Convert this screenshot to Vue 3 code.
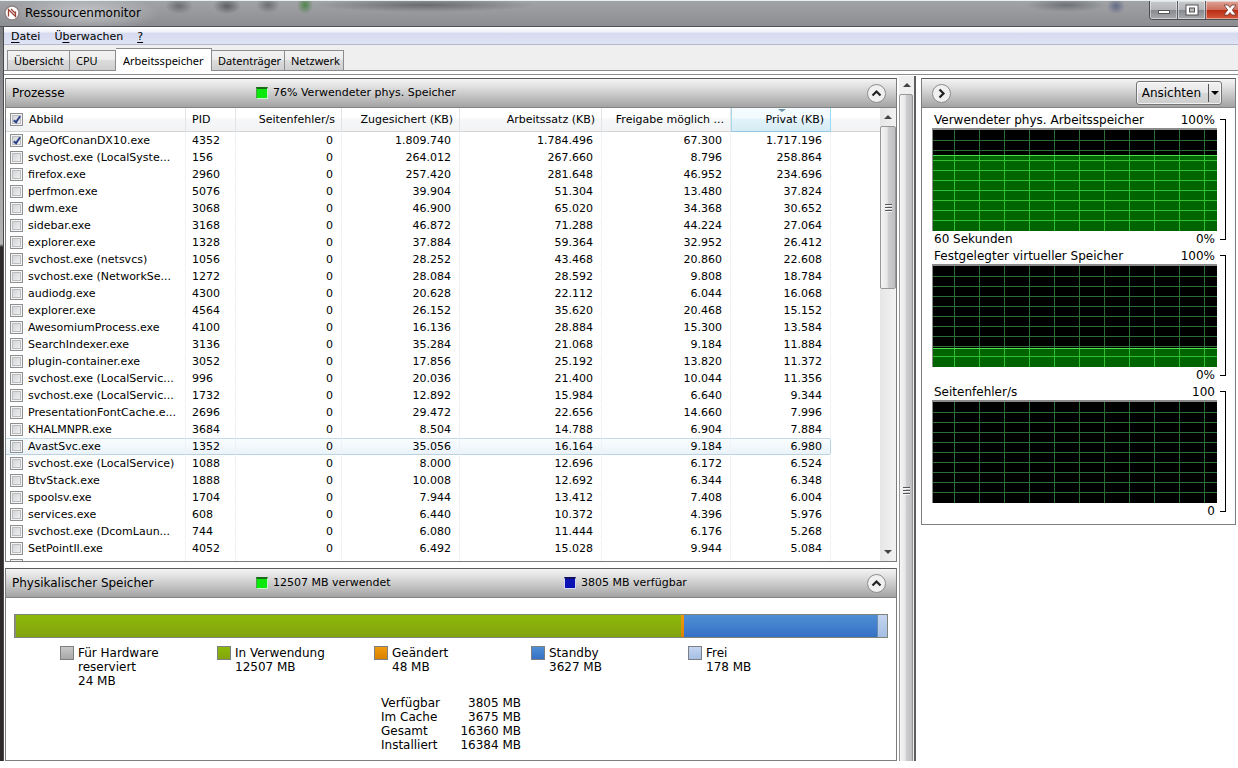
<script setup>
import { ref } from 'vue'

const tabs = [
  { name: 'Übersicht', cls: 't1' },
  { name: 'CPU', cls: 't2' },
  { name: 'Arbeitsspeicher', cls: 't3' },
  { name: 'Datenträger', cls: 't4' },
  { name: 'Netzwerk', cls: 't5' },
]
const activeTab = ref('Arbeitsspeicher')

const processes = ref(
  [
    ['AgeOfConanDX10.exe', '4352', '1.809.740', '1.784.496', '67.300', '1.717.196'],
    ['svchost.exe (LocalSyste...', '156', '264.012', '267.660', '8.796', '258.864'],
    ['firefox.exe', '2960', '257.420', '281.648', '46.952', '234.696'],
    ['perfmon.exe', '5076', '39.904', '51.304', '13.480', '37.824'],
    ['dwm.exe', '3068', '46.900', '65.020', '34.368', '30.652'],
    ['sidebar.exe', '3168', '46.872', '71.288', '44.224', '27.064'],
    ['explorer.exe', '1328', '37.884', '59.364', '32.952', '26.412'],
    ['svchost.exe (netsvcs)', '1056', '28.252', '43.468', '20.860', '22.608'],
    ['svchost.exe (NetworkSe...', '1272', '28.084', '28.592', '9.808', '18.784'],
    ['audiodg.exe', '4300', '20.628', '22.112', '6.044', '16.068'],
    ['explorer.exe', '4564', '26.152', '35.620', '20.468', '15.152'],
    ['AwesomiumProcess.exe', '4100', '16.136', '28.884', '15.300', '13.584'],
    ['SearchIndexer.exe', '3136', '35.284', '21.068', '9.184', '11.884'],
    ['plugin-container.exe', '3052', '17.856', '25.192', '13.820', '11.372'],
    ['svchost.exe (LocalServic...', '996', '20.036', '21.400', '10.044', '11.356'],
    ['svchost.exe (LocalServic...', '1732', '12.892', '15.984', '6.640', '9.344'],
    ['PresentationFontCache.e...', '2696', '29.472', '22.656', '14.660', '7.996'],
    ['KHALMNPR.exe', '3684', '8.504', '14.788', '6.904', '7.884'],
    ['AvastSvc.exe', '1352', '35.056', '16.164', '9.184', '6.980'],
    ['svchost.exe (LocalService)', '1088', '8.000', '12.696', '6.172', '6.524'],
    ['BtvStack.exe', '1888', '10.008', '12.692', '6.344', '6.348'],
    ['spoolsv.exe', '1704', '7.944', '13.412', '7.408', '6.004'],
    ['services.exe', '608', '6.440', '10.372', '4.396', '5.976'],
    ['svchost.exe (DcomLaun...', '744', '6.080', '11.444', '6.176', '5.268'],
    ['SetPointII.exe', '4052', '6.492', '15.028', '9.944', '5.084'],
  ].map((p, i) => ({ name: p[0], pid: p[1], nums: ['0', ...p.slice(2)], checked: i === 0 }))
)
const hovered = 18
const allChecked = ref(true)

const memory = [
  { cls: 'hardware', label: ['Für Hardware', 'reserviert'], mb: 24 },
  { cls: 'used', label: ['In Verwendung'], mb: 12507 },
  { cls: 'modified', label: ['Geändert'], mb: 48 },
  { cls: 'standby', label: ['Standby'], mb: 3627 },
  { cls: 'free', label: ['Frei'], mb: 178 },
]
const totals = [
  ['Verfügbar', '3805 MB'],
  ['Im Cache', '3675 MB'],
  ['Gesamt', '16360 MB'],
  ['Installiert', '16384 MB'],
]

const charts = [
  { title: 'Verwendeter phys. Arbeitsspeicher', max: '100%', min: '0%', span: '60 Sekunden', level: 76 },
  { title: 'Festgelegter virtueller Speicher', max: '100%', min: '0%', span: '', level: 19 },
  { title: 'Seitenfehler/s', max: '100', min: '0', span: '', level: 0 },
]
const gridX = Array.from({ length: 11 }, (_, i) => 21 + i * 25)
const gridY = Array.from({ length: 9 }, (_, i) => 10 + i * 10)
</script>

<template>
  <div class="window">
    <header class="titlebar">
      <svg class="logo" viewBox="0 0 16 16" aria-hidden="true">
        <circle cx="8" cy="8" r="7" fill="#fff" stroke="#8d8585" stroke-width="1.4" />
        <path d="M4.500 11.500V4.500L11.500 11.500V6.500M7 4l4.500 4.500" fill="none" stroke="#9c4136" stroke-width="1.3" />
      </svg>
      <span class="caption">Ressourcenmonitor</span>
      <div class="controls">
        <button class="ctl" aria-label="Minimieren">
          <svg width="14" height="12" viewBox="0 0 14 12"><rect x="1.500" y="6.500" width="11" height="3" fill="#fff" stroke="#555" /></svg>
        </button>
        <button class="ctl" aria-label="Maximieren">
          <svg width="14" height="12" viewBox="0 0 14 12"><rect x="1" y="1" width="12" height="10" fill="#fff" stroke="#555" /><rect x="4.500" y="4" width="5" height="4" fill="#bbb" stroke="#555" /></svg>
        </button>
        <button class="ctl close" aria-label="Schließen">
          <svg width="14" height="12" viewBox="0 0 14 12"><path d="M1 1h4l2 2.500L9 1h4L9.300 6l3.700 5H9L7 8.500L5 11H1l3.700-5z" fill="#fff" stroke="#6b3a34" stroke-width=".8" /></svg>
        </button>
      </div>
    </header>
    <div class="frame">
      <div class="client">
        <nav class="menu">
          <a href="#"><u>D</u>atei</a>
          <a href="#">Ü<u>b</u>erwachen</a>
          <a href="#"><u>?</u></a>
        </nav>
        <div class="tabs" role="tablist">
          <button
            v-for="t in tabs"
            :key="t.name"
            role="tab"
            :aria-selected="activeTab === t.name"
            :class="['tab', t.cls, { active: activeTab === t.name }]"
            @click="activeTab = t.name"
          >{{ t.name }}</button>
        </div>
        <div class="strip"></div>
        <div class="body">
          <main class="panels">
            <section class="panel grow">
              <div class="bar-head">
                <h2>Prozesse</h2>
                <span class="stat"><i class="led green"></i>76% Verwendeter phys. Speicher</span>
                <button class="round" aria-label="Reduzieren">
                  <svg width="19" height="19" viewBox="0 0 19 19"><circle cx="9.500" cy="9.500" r="9" fill="#f0f0f0" stroke="#8c8c8c" /><path d="M5.500 11.500l4-4l4 4" fill="none" stroke="#222" stroke-width="2.200" /></svg>
                </button>
              </div>
              <div class="listing">
                <div class="table-clip">
                  <table>
                    <colgroup>
                      <col class="c-name" /><col class="c-pid" /><col class="c-fault" /><col class="c-commit" />
                      <col class="c-set" /><col class="c-share" /><col class="c-priv" /><col />
                    </colgroup>
                    <thead>
                      <tr>
                        <th class="left">
                          <label class="pick"><input v-model="allChecked" type="checkbox" /><span>Abbild</span></label>
                        </th>
                        <th class="left">PID</th>
                        <th>Seitenfehler/s</th>
                        <th>Zugesichert (KB)</th>
                        <th>Arbeitssatz (KB)</th>
                        <th>Freigabe möglich ...</th>
                        <th class="sorted" aria-sort="descending">Privat (KB)</th>
                        <th class="rest"></th>
                      </tr>
                    </thead>
                    <tbody>
                      <tr v-for="(p, i) in processes" :key="i" :class="{ hover: i === hovered }">
                        <td class="left">
                          <label class="pick"><input v-model="p.checked" type="checkbox" /><span>{{ p.name }}</span></label>
                        </td>
                        <td class="left">{{ p.pid }}</td>
                        <td v-for="(n, j) in p.nums" :key="j">{{ n }}</td>
                        <td class="rest"></td>
                      </tr>
                      <tr>
                        <td class="left"><label class="pick"><input type="checkbox" aria-label="Prozess" /></label></td>
                        <td></td><td></td><td></td><td></td><td></td><td></td><td class="rest"></td>
                      </tr>
                    </tbody>
                  </table>
                </div>
                <div class="scroll inner">
                  <button aria-label="Nach oben"><i class="up"></i></button>
                  <div class="thumb short"><i class="grip"></i></div>
                  <div class="track"></div>
                  <button aria-label="Nach unten"><i class="down"></i></button>
                </div>
              </div>
            </section>

            <section class="panel">
              <div class="bar-head">
                <h2>Physikalischer Speicher</h2>
                <span class="stat"><i class="led green"></i>12507 MB verwendet</span>
                <span class="stat"><i class="led blue"></i>3805 MB verfügbar</span>
                <button class="round" aria-label="Reduzieren">
                  <svg width="19" height="19" viewBox="0 0 19 19"><circle cx="9.500" cy="9.500" r="9" fill="#f0f0f0" stroke="#8c8c8c" /><path d="M5.500 11.500l4-4l4 4" fill="none" stroke="#222" stroke-width="2.200" /></svg>
                </button>
              </div>
              <div class="memory">
                <div class="usage">
                  <div v-for="m in memory" :key="m.cls" :class="m.cls" :style="{ flexGrow: m.mb }"></div>
                </div>
                <ul class="legend">
                  <li v-for="m in memory" :key="m.cls">
                    <i :class="m.cls"></i>
                    <div>
                      <div v-for="l in m.label" :key="l">{{ l }}</div>
                      <div>{{ m.mb }} MB</div>
                    </div>
                  </li>
                </ul>
                <dl class="totals">
                  <template v-for="t in totals" :key="t[0]">
                    <dt>{{ t[0] }}</dt>
                    <dd>{{ t[1] }}</dd>
                  </template>
                </dl>
              </div>
            </section>
          </main>

          <div class="scroll outer">
            <button aria-label="Nach oben"><i class="up"></i></button>
            <div class="thumb full"><i class="grip"></i></div>
          </div>

          <aside class="side">
            <section class="panel">
              <div class="bar-head side-head">
                <button class="round" aria-label="Ausblenden">
                  <svg width="19" height="19" viewBox="0 0 19 19"><circle cx="9.500" cy="9.500" r="9" fill="#f0f0f0" stroke="#8c8c8c" /><path d="M7.500 5.500l4 4l-4 4" fill="none" stroke="#222" stroke-width="2.200" /></svg>
                </button>
                <button class="views">Ansichten<span class="drop"><i></i></span></button>
              </div>
              <div class="charts">
                <figure v-for="c in charts" :key="c.title">
                  <div class="plot">
                    <figcaption><span>{{ c.title }}</span><span>{{ c.max }}</span></figcaption>
                    <svg class="graph" viewBox="0 0 284 101" preserveAspectRatio="none" shape-rendering="crispEdges">
                      <rect width="284" height="101" fill="#000" />
                      <g stroke="#2d6e35">
                        <path v-for="x in gridX" :key="'x' + x" :d="`M${x}.5 0V101`" />
                        <path v-for="y in gridY" :key="'y' + y" :d="`M0 ${y}.5H284`" />
                      </g>
                      <g v-if="c.level">
                        <rect x="0" :y="101 - c.level" width="284" :height="c.level" fill="#006400" />
                        <g stroke="#2fc02f">
                          <path v-for="x in gridX" :key="'x' + x" :d="`M${x}.5 ${101 - c.level}V101`" />
                          <path v-for="y in gridY.filter((v) => v > 101 - c.level)" :key="'y' + y" :d="`M0 ${y}.5H284`" />
                        </g>
                        <path :d="`M0 ${101 - c.level}.5H284`" stroke="#4be04b" />
                      </g>
                    </svg>
                    <div class="foot"><span>{{ c.span }}</span><span>{{ c.min }}</span></div>
                  </div>
                  <div class="bracket"></div>
                </figure>
              </div>
            </section>
          </aside>
        </div>
      </div>
    </div>
  </div>
</template>

<style>
body { margin: 0; background: #fff; }
</style>

<style scoped>
* { box-sizing: border-box; }
.window {
  display: flex;
  flex-direction: column;
  height: calc(100vh - 7px);
  min-height: 600px;
  overflow: hidden;
  font: 11px/14px "DejaVu Sans", Verdana, sans-serif;
  color: #000;
}
button { font: inherit; color: inherit; padding: 0; margin: 0; border: 0; background: none; }

/* Title bar */
.titlebar {
  flex: none;
  display: flex;
  align-items: flex-start;
  height: 27px;
  border-top: 1px solid #e8eff0;
  border-bottom: 1px solid #50545a;
  overflow: hidden;
  background:
    radial-gradient(ellipse 75px 18px at 85px 12px, rgba(225, 227, 229, .6), transparent),
    radial-gradient(ellipse 14px 8px at 179px 5px, rgba(60, 62, 66, .5), transparent),
    radial-gradient(ellipse 14px 8px at 227px 5px, rgba(50, 52, 56, .6), transparent),
    radial-gradient(ellipse 12px 8px at 268px 4px, rgba(60, 62, 66, .5), transparent),
    radial-gradient(ellipse 8px 9px at 305px 4px, rgba(60, 125, 55, .8), transparent),
    radial-gradient(ellipse 110px 7px at 425px 4px, rgba(70, 72, 76, .6), transparent),
    radial-gradient(ellipse 40px 7px at 1066px 4px, rgba(80, 84, 90, .6), transparent),
    radial-gradient(ellipse 9px 8px at 1116px 5px, rgba(60, 72, 115, .6), transparent),
    linear-gradient(#a2a3a6, #8b8d91);
}
.logo { width: 16px; height: 16px; margin: 4px 5px 0 4px; }
.caption { flex: 1; font-size: 12px; line-height: 24px; }
.controls {
  flex: none;
  display: flex;
  height: 19px;
  margin-right: -17px;
  border: 1px solid #4b4e53;
  border-top: 0;
  border-radius: 0 0 4px 4px;
  overflow: hidden;
}
.ctl {
  display: flex;
  align-items: center;
  justify-content: center;
  width: 28px;
  border-right: 1px solid #5a5d62;
  background: linear-gradient(#c8c9cb, #b3b5b8 48%, #85888c 50%, #a7a9ad);
  box-shadow: inset 0 0 0 1px rgba(255, 255, 255, .45);
}
.ctl.close { width: 48px; border-right: 0; background: linear-gradient(#dda69b, #cf6d5b 48%, #b92d12 50%, #d3593b); }

/* Frame */
.frame {
  flex: 1;
  min-height: 0;
  display: flex;
  padding-left: 3px;
  background: linear-gradient(#7b7d80, #b5b5b6 217px, #2e2b2a 220px);
}
.client {
  flex: 1;
  min-width: 0;
  display: flex;
  flex-direction: column;
  border-left: 1px solid #4a4a4a;
  background: #fff;
}
.menu {
  flex: none;
  display: flex;
  gap: 14px;
  height: 18px;
  padding-left: 7px;
  line-height: 19px;
  border-bottom: 1px solid #b5b9cc;
  background: linear-gradient(#fff, #eef1f8 30%, #d5daef 36%, #dfe3f5);
}
.menu a { color: #000; text-decoration: none; }
.menu u { text-underline-offset: 2px; }
.tabs {
  flex: none;
  display: flex;
  align-items: flex-end;
  height: 26px;
  padding-left: 3px;
  background: #efefef;
  border-bottom: 1px solid #8b8c8f;
}
.tab {
  height: 20px;
  padding-left: 6px;
  text-align: left;
  font: 11px/20px "Noto Sans", Tahoma, sans-serif;
  border: 1px solid #8b8c8f;
  border-left: 0;
  border-bottom: 0;
  background: linear-gradient(#f3f3f3, #ebebeb 50%, #dcdcdc 50%, #cfcfcf);
  white-space: nowrap;
}
.tab.t1 { width: 63px; border-left: 1px solid #8b8c8f; }
.tab.t2 { width: 46px; }
.tab.t3 { width: 96px; }
.tab.t4 { width: 73px; }
.tab.t5 { width: 59px; }
.tab.active { height: 23px; margin-bottom: -1px; line-height: 21px; padding-left: 7px; background: #fff; }
.strip { flex: none; height: 4px; border-bottom: 1px solid #8b8c8f; }

.body { flex: 1; min-height: 0; display: flex; }
.panels {
  flex: 1;
  min-width: 0;
  display: flex;
  flex-direction: column;
  gap: 6px;
  padding: 3px 1px 0 1px;
}
.panel {
  display: flex;
  flex-direction: column;
  border: 1px solid #7d7d7d;
  border-top-color: #5c5c5c;
  background: #fff;
}
.panel.grow { flex: 1; min-height: 0; }
.bar-head {
  flex: none;
  display: flex;
  align-items: center;
  height: 29px;
  padding: 0 10px 0 6px;
  border-bottom: 1px solid #848484;
  background: linear-gradient(#f4f4f4, #dedede 30%, #a3a3a3);
}
.bar-head h2 { flex: none; width: 244px; margin: 0; font-size: 12px; font-weight: 400; }
.stat { flex: none; display: flex; align-items: center; gap: 5px; width: 308px; white-space: nowrap; }
.stat + .stat { width: auto; }
.led { width: 12px; height: 12px; border: 1px solid #c8f5c8; border-top: 2px solid #1c6b1c; border-left-color: #4da04d; background: #0be80b; }
.led.blue { border-color: #d0d8f5; border-top-color: #101060; background: #0a12b4; }
.round { display: flex; margin-left: auto; }

/* Process table */
.listing { flex: 1; min-height: 0; display: flex; }
.table-clip { flex: 1; min-width: 0; overflow: hidden; }
table { width: 100%; table-layout: fixed; border-collapse: separate; border-spacing: 0; }
.c-name { width: 180px; }
.c-pid { width: 50px; }
.c-fault { width: 106px; }
.c-commit { width: 118px; }
.c-set { width: 142px; }
.c-share { width: 129px; }
.c-priv { width: 100px; }
th {
  height: 24px;
  padding: 0 6px 0 0;
  font-weight: 400;
  text-align: right;
  white-space: nowrap;
  border-right: 1px solid #e2e4e6;
  border-bottom: 1px solid #d5d5d5;
  background: linear-gradient(#fff 45%, #f6f7f9 46%, #f2f3f5);
}
th.left { text-align: left; padding-left: 6px; }
th.left:first-child { padding-left: 4px; }
th.rest { border-right: 0; }
th.sorted {
  position: relative;
  border-right-color: #96d9f9;
  border-bottom-color: #96c9e0;
  background: linear-gradient(#f4fbfe 45%, #e3f3fa 46%, #d6ebf5);
  box-shadow: inset 1px 0 #a9d8ec;
}
th.sorted::before {
  content: "";
  position: absolute;
  top: 1px;
  left: 47px;
  border: 4px solid transparent;
  border-top: 3px solid #6a93a8;
  border-bottom: 0;
}
td {
  height: 17px;
  padding: 0 8px 0 0;
  line-height: 15px;
  text-align: right;
  white-space: nowrap;
  border: 1px solid transparent;
  border-left: 0;
  border-right-color: #f0f1f2;
}
td.left { text-align: left; padding-left: 6px; padding-right: 0; }
td.left:first-child { padding-left: 4px; }
td.rest { border-right: 0; }
tr.hover td:not(.rest) {
  border-top-color: #c3dbe8;
  border-bottom-color: #b9d3e2;
  background: linear-gradient(#fafdff, #eaf3f9);
}
tr.hover td:nth-child(7) { border-right-color: #b9d6e6; border-radius: 0 2px 2px 0; }
.pick { display: flex; align-items: center; gap: 5px; height: 15px; }
th .pick { gap: 6px; }
.pick input {
  flex: none;
  appearance: none;
  display: block;
  position: relative;
  width: 13px;
  height: 13px;
  margin: 0;
  border: 1px solid #8e8f8f;
  box-shadow: inset 0 0 0 1px #f4f4f4, inset 0 0 0 2px #b9bcc0;
  background: linear-gradient(135deg, #cbcdd0, #f6f6f6);
}
.pick input:checked::after {
  content: "";
  position: absolute;
  left: 4px;
  top: 1px;
  box-sizing: content-box;
  width: 2px;
  height: 6px;
  border: solid #31448a;
  border-width: 0 2px 2px 0;
  transform: rotate(35deg);
}

/* Scroll bars */
.scroll { flex: none; display: flex; flex-direction: column; background: #efefef; }
.scroll button { flex: none; display: flex; align-items: center; justify-content: center; height: 18px; }
.scroll.inner { width: 16px; background: linear-gradient(90deg, #e6e6e6, #f2f2f2); }
.scroll.outer { width: 18px; margin-top: 1px; overflow: hidden; border-right: 2px solid #5e5e5e; border-left: 1px solid #fff; }
.up, .down { border: 4px solid transparent; }
.up { border-top: 0; border-bottom-color: #444; }
.down { border-bottom: 0; border-top-color: #444; }
.thumb {
  display: flex;
  align-items: center;
  justify-content: center;
  border: 1px solid #979797;
  border-radius: 2px;
  background: linear-gradient(90deg, #f5f5f5, #e6e6e6 45%, #cfcfd1 50%, #bebec0);
}
.thumb.short { flex: 0 1 36%; }
/* The visible area ends before the thumb does. */
.thumb.full { flex: 1; margin: 0 1px -126px 0; }
.track { flex: 1; }
.grip { width: 7px; height: 8px; background: repeating-linear-gradient(#555 0 1px, #f8f8f8 1px 2px, transparent 2px 3px); }

/* Physical memory */
.memory { padding: 16px 8px 8px; font-size: 12px; line-height: 14px; }
.usage { display: flex; height: 24px; border: 1px solid #7f8578; }
.usage > div { flex-basis: 0; }
.hardware { background: linear-gradient(#c8c8c8, #a8a8a8); }
.used { background: linear-gradient(#8db90a, #83a30d); }
.modified { background: linear-gradient(#f09a10, #d98200); }
.standby { background: linear-gradient(#4f8fd6, #3670c4); }
.free { background: linear-gradient(#c4d5f0, #a5bfe4); }
.usage .hardware { background: #8a8d80; }
.usage .free { border-left: 1px solid #6f8bb0; }
.legend { display: grid; grid-template-columns: repeat(5, 157px); margin: 8px 0 0 46px; padding: 0; list-style: none; }
.legend li { display: flex; gap: 4px; }
.legend i { flex: none; width: 14px; height: 14px; border: 1px solid #7c8084; }
.totals { display: grid; grid-template-columns: 78px 62px; margin: 8px 0 0 367px; }
.totals dt, .totals dd { margin: 0; }
.totals dd { text-align: right; }

/* Right side */
.side { flex: none; width: 322px; padding: 3px 2px 0 5px; }
.side-head { padding: 0 13px 0 10px; }
.side-head .round { margin-left: 0; }
.views {
  display: flex;
  align-items: center;
  height: 24px;
  margin-left: auto;
  padding-left: 5px;
  font-size: 12px;
  border: 1px solid #767676;
  border-radius: 3px;
  background: linear-gradient(#f2f2f2, #e6e6e6 50%, #d8d8d8 50%, #cdcdcd);
  box-shadow: inset 0 0 0 1px rgba(255, 255, 255, .7);
}
.drop { display: flex; align-items: center; height: 18px; margin-left: 7px; padding: 0 2px; border-left: 1px solid #555; }
.drop i { border: 4px solid transparent; border-top-color: #000; border-bottom: 0; }
.charts { padding: 4px 9px 4px 10px; font-size: 12px; }
figure { display: flex; margin: 0; }
.plot { flex: 1; min-width: 0; }
figcaption, .foot { display: flex; justify-content: space-between; padding: 0 2px; line-height: 16px; height: 16px; white-space: nowrap; }
.foot { height: 17px; line-height: 17px; }
.graph { display: block; width: 100%; height: 103px; border: 0 solid #8a8a8a; border-width: 2px 0 0 1px; }
.bracket { width: 6px; margin: 7px 0 8px 3px; border: 1px solid #000; border-left: 0; }
</style>
